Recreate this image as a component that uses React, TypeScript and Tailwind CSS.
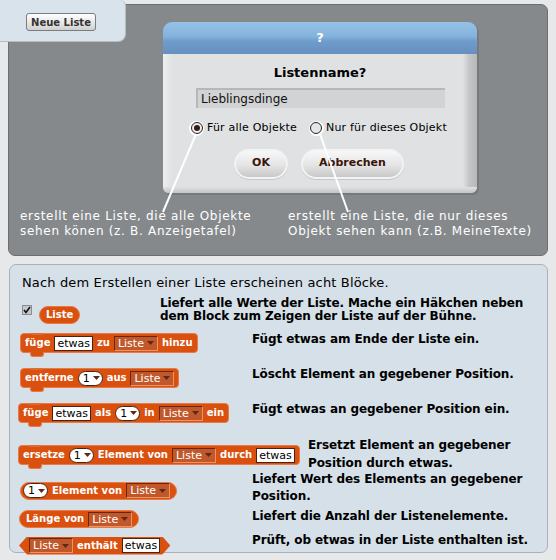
import React from "react";

const Tri = ({ color = "#5a2a18" }: { color?: string }) => (
  <svg width="7" height="4" viewBox="0 0 7 4" className="ml-[3px] shrink-0">
    <polygon points="0,0 7,0 3.5,4" fill={color} />
  </svg>
);

const Drop = () => (
  <span className="inline-flex items-center h-[15px] pl-[3px] pr-[3px] bg-[#c0582c] border border-t-[#6b2608] border-l-[#6b2608] border-b-[#ea9468] border-r-[#ea9468] text-white font-normal text-[11px] leading-none">
    Liste
    <Tri />
  </span>
);

const TextIn = ({ t }: { t: string }) => (
  <span className="inline-flex items-center h-[15px] px-[2px] bg-white border border-[#4a2210] text-black font-normal text-[11px] leading-none">
    {t}
  </span>
);

const Num = () => (
  <span className="inline-flex items-center h-[15px] pl-[4px] pr-[2px] bg-white rounded-full border border-[#4a2210] text-black font-normal text-[11px] leading-none">
    1
    <Tri />
  </span>
);

const Cmd = ({ children }: { children: React.ReactNode }) => (
  <div className="relative inline-flex items-center h-[20px] gap-[4px] pl-[4px] pr-[4px] bg-[#d9500f] border border-[#e87a48] rounded-[4px] text-white font-bold text-[10px] leading-none">
    <span className="absolute left-[10px] top-[-1px] w-[12px] h-[2px] bg-[#e06a34]" />
    {children}
    <span className="absolute left-[9px] bottom-[-5px] w-[14px] h-[5px] bg-[#d9500f] border border-t-0 border-[#e87a48] rounded-b-[3px]" />
  </div>
);

const Rep = ({ children }: { children: React.ReactNode }) => (
  <div className="inline-flex items-center h-[18px] gap-[4px] pl-[6px] pr-[6px] bg-[#d9500f] border border-[#e87a48] rounded-full text-white font-bold text-[10px] leading-none">
    {children}
  </div>
);

const Row = ({
  h,
  w,
  pl,
  bmt,
  block,
  desc,
  dmt,
  lead,
}: {
  h: string;
  w: string;
  pl: string;
  bmt: string;
  block: React.ReactNode;
  desc: React.ReactNode;
  dmt: string;
  lead: string;
}) => (
  <div className={`flex ${h}`}>
    <div className={`${w} ${pl} shrink-0`}>
      <div className={bmt}>{block}</div>
    </div>
    <div className={`${dmt} ${lead} font-bold text-[12px] text-black tracking-[-0.1px] whitespace-nowrap`}>{desc}</div>
  </div>
);

export default function App() {
  return (
    <div className="relative w-[556px] h-[560px] bg-[#e6e8ea] font-['DejaVu_Sans',sans-serif] overflow-hidden">
      {/* Top gray panel */}
      <div className="relative ml-[8px] mt-[4px] w-[540px] h-[252px] bg-[#86898b] border border-[#6c6f71] rounded-b-[7px] rounded-tr-[7px]">
        <div className="pt-[17px]">
          {/* Dialog */}
          <div className="ml-[154px] w-[314px] h-[171px] flex flex-col rounded-t-[9px] rounded-b-[6px] overflow-hidden shadow-[2px_2px_0_#77797b]">
            <div className="h-[32px] shrink-0 flex items-center justify-center bg-[linear-gradient(#96c2e6,#84b2dc_45%,#6f9ccb_60%,#6590c0)] text-white font-bold text-[13px]">
              ?
            </div>
            <div className="relative flex-1 bg-[linear-gradient(90deg,#eceef0_0px,#dfe1e3_10px,#dfe1e3_300px,#c4c6c8_306px,#b6b8ba)]">
              <div className="absolute left-0 right-0 bottom-0 h-[6px] bg-[linear-gradient(#dfe1e3,#c2c4c6)]" />
              <div className="relative pt-[11px] text-center font-bold text-[13px] leading-[16px] text-black">
                Listenname?
              </div>
              <div className="relative ml-[33px] mt-[7px] w-[249px] h-[20px] flex items-center pl-[3px] bg-[#d1d3d5] border-t-[2px] border-l-[2px] border-[#b5b7b9] text-[12px] text-[#111]">
                Lieblingsdinge
              </div>
              <div className="relative flex items-center mt-[12px] ml-[26px] text-[11px] text-black">
                <span className="w-[15px] h-[15px] rounded-full bg-white flex items-center justify-center">
                  <span className="w-[12px] h-[12px] rounded-full border border-[#222] bg-[#eee] flex items-center justify-center">
                    <span className="w-[6px] h-[6px] rounded-full bg-[#3a1a14]" />
                  </span>
                </span>
                <span className="ml-[3px] tracking-[0.2px]">Für alle Objekte</span>
                <span className="ml-[12px] w-[15px] h-[15px] rounded-full bg-white flex items-center justify-center">
                  <span className="w-[12px] h-[12px] rounded-full border border-[#222] bg-[#e4e6e8]" />
                </span>
                <span className="ml-[2px] tracking-[0.2px]">Nur für dieses Objekt</span>
              </div>
              <div className="relative flex mt-[12px] ml-[71px] gap-[13px]">
                <div className="w-[54px] h-[30px] rounded-full bg-[#f2f3f4] p-[2px] shadow-[0_1px_0_#c8c8c8]">
                  <div className="w-full h-full rounded-full bg-[linear-gradient(#f8f8f8,#e4e4e4_55%,#c8c8c8)] flex items-center justify-center font-bold text-[11px] text-[#3a140a]">
                    OK
                  </div>
                </div>
                <div className="w-[103px] h-[30px] rounded-full bg-[#f2f3f4] p-[2px] shadow-[0_1px_0_#c8c8c8]">
                  <div className="w-full h-full rounded-full bg-[linear-gradient(#f8f8f8,#e4e4e4_55%,#c8c8c8)] flex items-center justify-center font-bold text-[11px] text-[#3a140a]">
                    Abbrechen
                  </div>
                </div>
              </div>
            </div>
          </div>
          {/* annotations */}
          <div className="flex mt-[16px] text-white text-[12px] leading-[15px] tracking-[0.7px]">
            <div className="ml-[11px] w-[268px]">
              erstellt eine Liste, die alle Objekte
              <br />
              sehen könen (z. B. Anzeigetafel)
            </div>
            <div>
              erstellt eine Liste, die nur dieses
              <br />
              Objekt sehen kann (z.B. MeineTexte)
            </div>
          </div>
        </div>
        <svg className="absolute left-[-9px] top-[-5px]" width="556" height="260">
          <line x1="196" y1="134" x2="163" y2="212" stroke="white" strokeWidth="2" />
          <line x1="320" y1="134" x2="348" y2="212" stroke="white" strokeWidth="2" />
        </svg>
      </div>

      {/* Neue Liste panel */}
      <div className="absolute left-0 top-0 w-[126px] h-[42px] bg-[#d9e3eb] border-r border-b border-[#b4bcc4] rounded-br-[8px] rounded-tr-[6px] flex items-start">
        <div className="ml-[26px] mt-[13px] w-[70px] h-[18px] rounded-[3px] border border-[#7a7c7e] bg-[linear-gradient(#ffffff,#e4e4e4_60%,#cfcfcf)] flex items-center justify-center font-bold text-[10px] text-[#333]">
          Neue Liste
        </div>
      </div>

      {/* Bottom panel */}
      <div className="ml-[9px] mt-[8px] w-[539px] h-[289px] bg-[#d6e0e8] border border-[#a9b1b9] rounded-[7px]">
        <div className="h-[33px] pt-[10px] pl-[12px] text-[13px] leading-[16px] tracking-[0.15px] text-black">
          Nach dem Erstellen einer Liste erscheinen acht Blöcke.
        </div>
        <Row
          h="h-[30px]"
          w="w-[150px]"
          pl="pl-[12px]"
          bmt="mt-[3px] flex items-start"
          block={
            <>
              <svg width="10" height="10" viewBox="0 0 10 10" className="mt-[4px]">
                <rect x="0.5" y="0.5" width="9" height="9" fill="#c4c8cc" stroke="#8a8e92" />
                <path d="M2 5 L4 7.5 L8 2" stroke="#111" strokeWidth="1.6" fill="none" />
              </svg>
              <div className="ml-[7px]">
                <Rep>Liste</Rep>
              </div>
            </>
          }
          dmt="mt-[-1px]"
          lead="leading-[13px]"
          desc={
            <>
              Liefert alle Werte der Liste. Mache ein Häkchen neben
              <br />
              dem Block zum Zeigen der Liste auf der Bühne.
            </>
          }
        />
        <Row
          h="h-[35px]"
          w="w-[242px]"
          pl="pl-[10px]"
          bmt="mt-[1px]"
          block={
            <Cmd>
              füge <TextIn t="etwas" /> zu <Drop /> hinzu
            </Cmd>
          }
          dmt="mt-[3px]"
          lead="leading-[16px]"
          desc="Fügt etwas am Ende der Liste ein."
        />
        <Row
          h="h-[35px]"
          w="w-[242px]"
          pl="pl-[10px]"
          bmt="mt-[1px]"
          block={
            <Cmd>
              entferne <Num /> aus <Drop />
            </Cmd>
          }
          dmt="mt-[3px]"
          lead="leading-[16px]"
          desc="Löscht Element an gegebener Position."
        />
        <Row
          h="h-[38px]"
          w="w-[242px]"
          pl="pl-[8px]"
          bmt="mt-[1px]"
          block={
            <Cmd>
              füge <TextIn t="etwas" /> als <Num /> in <Drop /> ein
            </Cmd>
          }
          dmt="mt-[3px]"
          lead="leading-[16px]"
          desc="Fügt etwas an gegebener Position ein."
        />
        <Row
          h="h-[35px]"
          w="w-[298px]"
          pl="pl-[8px]"
          bmt="mt-[5px]"
          block={
            <Cmd>
              ersetze <Num /> Element von <Drop /> durch <TextIn t="etwas" />
            </Cmd>
          }
          dmt="mt-[0px]"
          lead="leading-[18px]"
          desc={
            <>
              Ersetzt Element an gegebener
              <br />
              Position durch etwas.
            </>
          }
        />
        <Row
          h="h-[33px]"
          w="w-[242px]"
          pl="pl-[10px]"
          bmt="mt-[6px]"
          block={
            <Rep>
              <span className="-ml-[4px]">
                <Num />
              </span>
              Element von <Drop />
            </Rep>
          }
          dmt="mt-[0px]"
          lead="leading-[17px]"
          desc={
            <>
              Liefert Wert des Elements an gegebener
              <br />
              Position.
            </>
          }
        />
        <Row
          h="h-[27px]"
          w="w-[242px]"
          pl="pl-[9px]"
          bmt="mt-[1px]"
          block={
            <Rep>
              Länge von <Drop />
            </Rep>
          }
          dmt="mt-[4px]"
          lead="leading-[16px]"
          desc="Liefert die Anzahl der Listenelemente."
        />
        <Row
          h="h-[20px]"
          w="w-[242px]"
          pl="pl-[9px]"
          bmt="mt-[1px]"
          block={
            <div className="inline-flex items-center h-[18px] gap-[4px] pl-[10px] pr-[10px] bg-[#d9500f] text-white font-bold text-[10px] leading-none [clip-path:polygon(0_50%,8px_0,calc(100%-8px)_0,100%_50%,calc(100%-8px)_100%,8px_100%)]">
              <Drop /> enthält <TextIn t="etwas" />
            </div>
          }
          dmt="mt-[1px]"
          lead="leading-[16px]"
          desc="Prüft, ob etwas in der Liste enthalten ist."
        />
      </div>
    </div>
  );
}
